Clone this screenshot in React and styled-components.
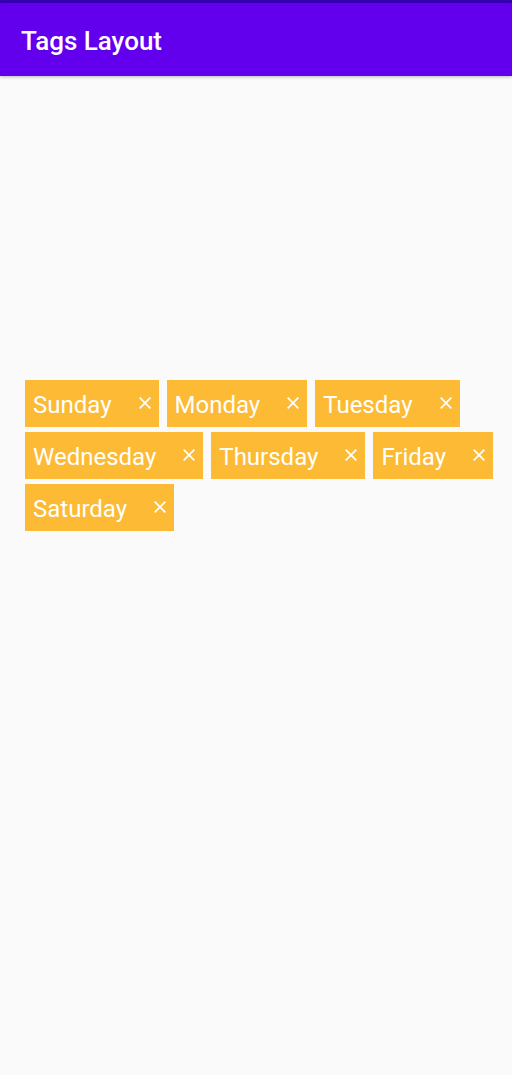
import React from "react";
import styled, { createGlobalStyle } from "styled-components";

const days = ["Sunday", "Monday", "Tuesday", "Wednesday", "Thursday", "Friday", "Saturday"];

const App = () => (
  <>
    <GlobalStyle />
    <Screen>
      <StatusBar />
      <AppBar>
        <Title>Tags Layout</Title>
      </AppBar>
      <Content>
        <TagList>
          {days.map((day) => (
            <Tag key={day}>
              <TagLabel>{day}</TagLabel>
              <CloseIcon viewBox="0 0 12 12">
                <path d="M0.7 0.7 L11.3 11.3 M11.3 0.7 L0.7 11.3" />
              </CloseIcon>
            </Tag>
          ))}
        </TagList>
      </Content>
    </Screen>
  </>
);

const GlobalStyle = createGlobalStyle`
  body {
    margin: 0;
    background: #fafafa;
    font-family: Roboto, "Noto Sans", sans-serif;
  }
`;

const Screen = styled.div`
  min-height: 1075px;
  display: flex;
  flex-direction: column;
  background: #fafafa;
`;

const StatusBar = styled.div`
  height: 3px;
  background: #3700b3;
`;

const AppBar = styled.header`
  height: 73px;
  background: #6200ee;
  display: flex;
  align-items: center;
  padding: 0 21px;
  box-shadow: 0 1px 3px rgba(0, 0, 0, 0.25);
  position: relative;
  z-index: 1;
`;

const Title = styled.h1`
  margin: 3px 0 0;
  font-family: Roboto, sans-serif;
  font-weight: 500;
  font-size: 26px;
  color: #ffffff;
`;

const Content = styled.main`
  padding: 304px 18px 0 25px;
`;

const TagList = styled.div`
  display: flex;
  flex-wrap: wrap;
  column-gap: 8px;
  row-gap: 5px;
`;

const Tag = styled.div`
  height: 47px;
  box-sizing: border-box;
  display: flex;
  align-items: center;
  padding: 3px 8px 0;
  background: #fdba35;
`;

const TagLabel = styled.span`
  font-family: Roboto, sans-serif;
  font-size: 24px;
  color: #ffffff;
  margin-right: 27px;
`;

const CloseIcon = styled.svg`
  width: 12px;
  height: 12px;
  margin-bottom: 4px;
  stroke: #ffffff;
  stroke-width: 1.8;
  fill: none;
`;

export default App;
